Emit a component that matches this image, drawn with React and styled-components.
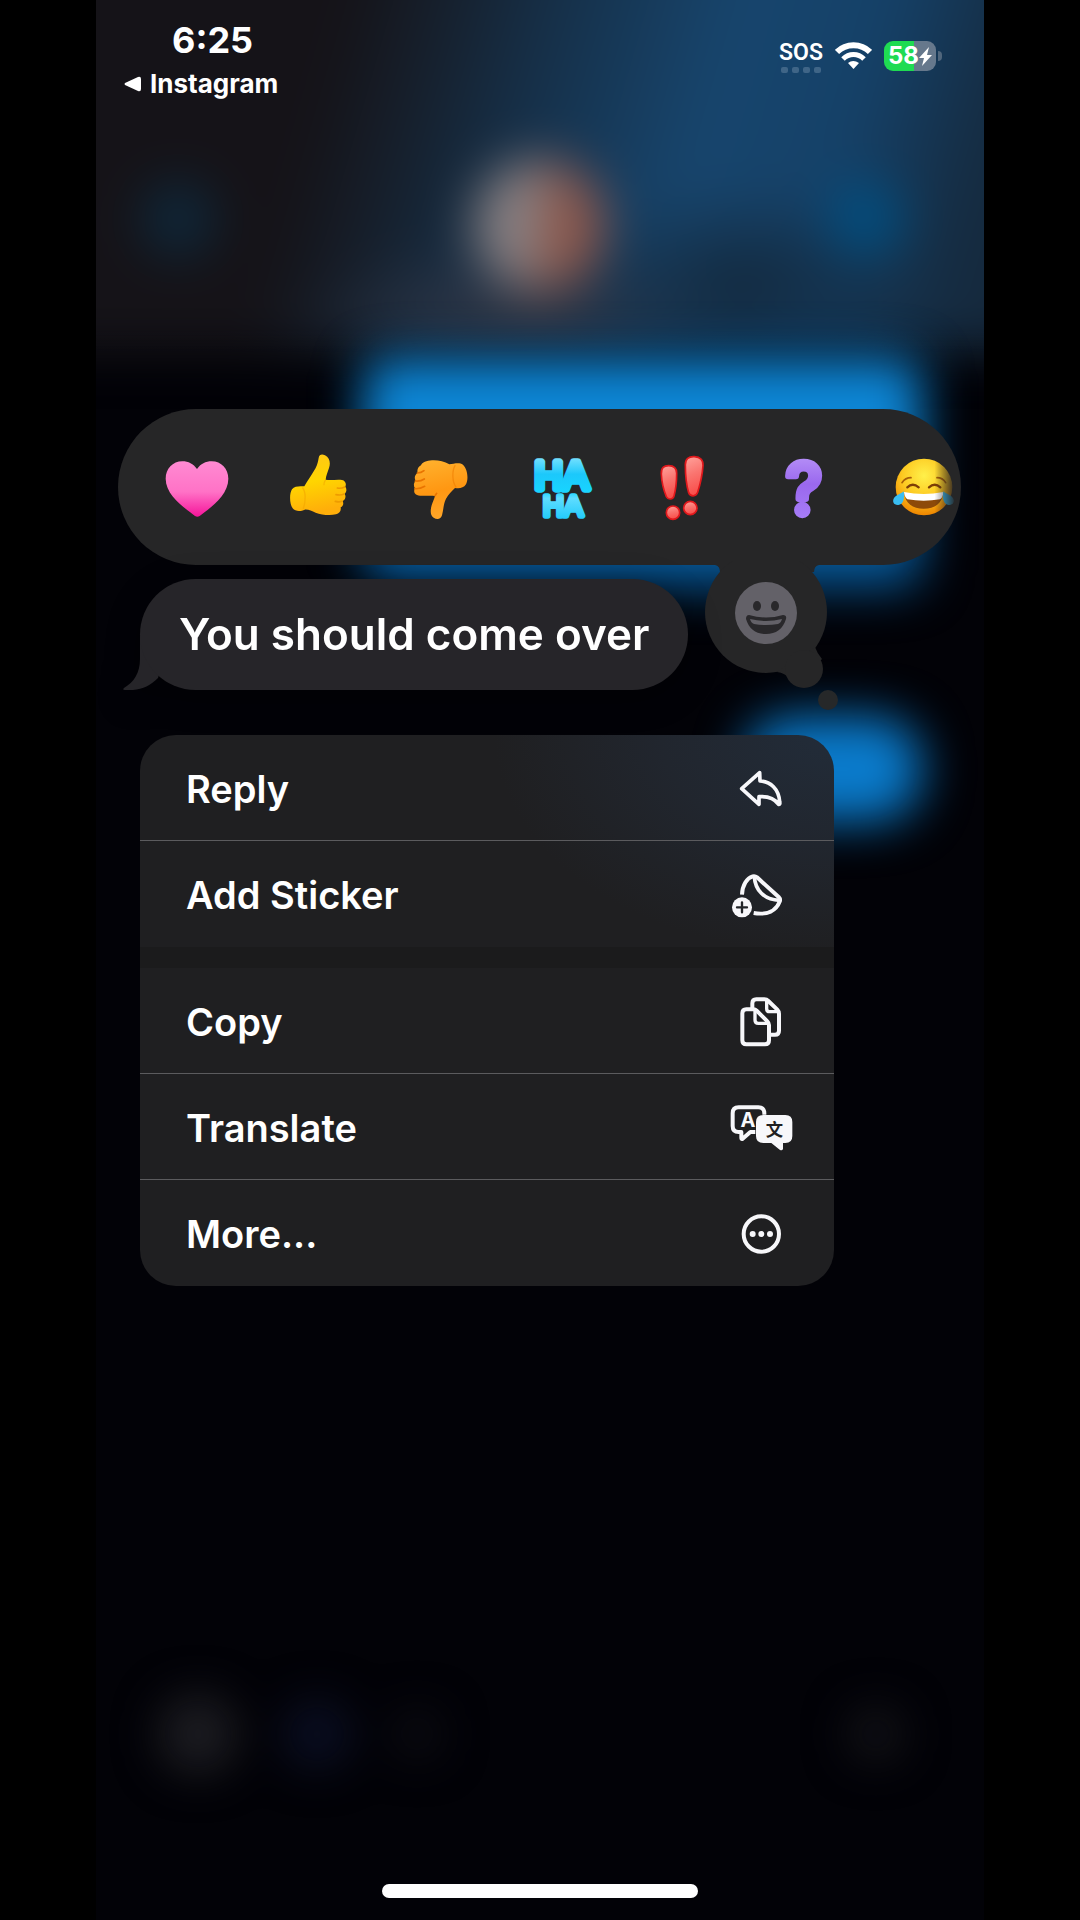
import React from "react";
import styled, { createGlobalStyle } from "styled-components";

const GlobalStyle = createGlobalStyle`
  *, *::before, *::after { box-sizing: border-box; }
  body {
    margin: 0;
    background: #000;
    color: #fff;
    font-family: Inter, "Liberation Sans", sans-serif;
  }
  button { font: inherit; color: inherit; border: 0; background: none; padding: 0; cursor: pointer; }
`;

const Page = styled.div`
  min-height: 100vh;
  display: flex;
  padding: 0 96px;
  background: #000;
`;

const Phone = styled.div`
  position: relative;
  flex: 1;
  min-width: 0;
  display: flex;
  flex-direction: column;
  overflow: hidden;
  background: #020207;
`;

/* Blurred conversation behind the overlay */
const Backdrop = styled.div`
  position: absolute;
  inset: 0;
  display: flex;
  flex-direction: column;
`;

const BlurHeader = styled.div`
  flex: none;
  height: 416px;
  margin: -64px -64px 0;
  padding: 0 108px;
  display: grid;
  grid-template-columns: 1fr 2fr 1fr;
  align-items: center;
  justify-items: center;
  filter: blur(24px);
  background:
    radial-gradient(ellipse 180px 100px at 70% 84%, #13283c 0%, transparent 100%),
    radial-gradient(ellipse 220px 80px at 48% 92%, #2c3444 20%, transparent 100%),
    linear-gradient(106deg, #151318 0%, #151318 29%, #16202d 38%, #163049 48%, #17456d 64%, #154168 77%, #152c42 89%, #152536 100%);
`;

const BlurShade = styled.div`
  flex: none;
  height: 352px;
  margin-top: -352px;
  background: linear-gradient(180deg, rgba(21, 22, 30, 0) 50%, rgba(18, 19, 28, 0.35) 88%, rgba(2, 2, 7, 0.5) 100%);
`;

const BlurButton = styled.span`
  width: 76px;
  height: 76px;
  margin: 150px ${(p) => p.$inset}px 0;
  border-radius: 50%;
  background: ${(p) => p.$color};
  justify-self: ${(p) => p.$side};
`;

const BlurAvatar = styled.span`
  width: 132px;
  height: 132px;
  margin-top: 162px;
  border-radius: 50%;
  background: linear-gradient(95deg, #878184 40%, #8c574b 60%);
`;

const BlurBubble = styled.div`
  flex: none;
  align-self: flex-end;
  width: ${(p) => p.$width};
  height: ${(p) => p.$height}px;
  margin: ${(p) => p.$gap}px 62px 0 0;
  border-radius: ${(p) => p.$radius}px;
  background: ${(p) => p.$color};
  filter: blur(24px);
`;

const BlurComposer = styled.div`
  display: flex;
  align-items: center;
  margin-top: auto;
  padding: 0 80px 146px 62px;
  filter: blur(22px);
`;

const BlurSpot = styled.span`
  width: ${(p) => p.$size}px;
  height: ${(p) => p.$size}px;
  margin-left: ${(p) => p.$left};
  border-radius: 50%;
  background: ${(p) => p.$color};
`;

const Overlay = styled.div`
  position: relative;
  flex: 1;
  display: flex;
  flex-direction: column;
`;

const StatusBar = styled.header`
  display: flex;
  justify-content: space-between;
  align-items: flex-start;
  padding: 18px 42px 0 28px;
`;

const StatusLeft = styled.div`
  display: flex;
  flex-direction: column;
  gap: 6px;
`;

const Time = styled.time`
  padding: 0 48px;
  font-size: 36px;
  line-height: 44px;
  font-weight: 700;
`;

const BackLink = styled.a`
  display: flex;
  align-items: center;
  gap: 9px;
  color: #fff;
  font-size: 26px;
  line-height: 32px;
  font-weight: 700;
  text-decoration: none;
`;

const StatusRight = styled.div`
  display: flex;
  align-items: center;
  gap: 12px;
  height: 76px;
`;

const Signal = styled.div`
  display: flex;
  flex-direction: column;
  align-items: center;
  font-family: Roboto, "Liberation Sans", sans-serif;
  font-size: 23px;
  line-height: 28px;
  font-weight: 600;
`;

const Dots = styled.div`
  display: flex;
  gap: 4px;

  i {
    width: 7px;
    height: 6px;
    border-radius: 2px;
    background: #3f6587;
  }
`;

const Battery = styled.div`
  display: flex;
  align-items: center;
  gap: 2px;

  &::after {
    content: "";
    width: 4px;
    height: 10px;
    border-radius: 0 4px 4px 0;
    background: #50667c;
  }
`;

const BatteryBody = styled.div`
  display: flex;
  align-items: center;
  justify-content: center;
  width: 52px;
  height: 30px;
  border-radius: 9px;
  background: linear-gradient(90deg, #1fdb52 58%, #66788c 58%);
  font-size: 24px;
  line-height: 30px;
  font-weight: 700;
`;

const Focus = styled.main`
  display: flex;
  flex-direction: column;
  align-items: flex-start;
  margin-top: 309px;
`;

const Tapback = styled.section`
  position: relative;
  align-self: stretch;
  margin: 0 23px 0 22px;
`;

const Reactions = styled.div`
  display: flex;
  align-items: center;
  height: 156px;
  padding-left: 18px;
  border-radius: 78px;
  overflow: hidden;
  background: #262627;
`;

const Reaction = styled.button`
  flex: none;
  width: 121px;
  height: 121px;
  display: grid;
  place-items: center;
  mask-image: ${(p) => (p.$fade ? "linear-gradient(90deg, #000 60%, transparent 78%)" : "none")};
`;

const MoreReactions = styled.button`
  position: absolute;
  top: calc(100% - 4px);
  right: 120px;
  line-height: 0;
`;

const Bubble = styled.div`
  display: flex;
  align-items: center;
  height: 111px;
  margin: 14px 0 0 27px;
  filter: drop-shadow(0 8px 16px rgba(0, 0, 0, 0.4));
`;

const BubbleText = styled.p`
  margin: 0 0 0 -27px;
  padding: 28px 39px 29px 39px;
  border-radius: 56px;
  background: #262529;
  font-size: 44px;
  line-height: 54px;
  font-weight: 600;
`;

const Menu = styled.div`
  width: 694px;
  max-width: calc(100% - 88px);
  margin: 45px 0 0 44px;
  border-radius: 36px;
  overflow: hidden;
  background:
    radial-gradient(ellipse 340px 220px at 100% 0, #222c39 0%, rgba(34, 41, 52, 0.7) 50%, transparent 100%),
    #1f1f21;
`;

const MenuGroup = styled.div`
  & + & { border-top: 21px solid rgba(26, 26, 28, 0.8); }
`;

const MenuItem = styled.button`
  width: 100%;
  height: 106px;
  display: flex;
  align-items: center;
  justify-content: space-between;
  padding: 2px 40px 0 46px;
  border-bottom: ${(p) => (p.$last ? "0" : "1px solid #5b5b5e")};
  font-size: 38px;
  line-height: 48px;
  font-weight: 600;
  text-align: left;
`;

const HomeBar = styled.div`
  width: 316px;
  height: 14px;
  margin: auto auto 22px;
  border-radius: 7px;
  background: #fff;
`;

const Art = ({ box, children, w = 72, h = 72 }) => (
  <svg width={w} height={h} viewBox={box} fill="none" overflow="visible" aria-hidden="true">
    {children}
  </svg>
);

const HeartArt = () => (
  <Art box="153 153 216 216">
    <defs>
      <linearGradient id="heart" x1="0" y1="0" x2="0" y2="1">
        <stop offset="0" stopColor="#ff8ad2" />
        <stop offset="0.55" stopColor="#ff72c6" />
        <stop offset="1" stopColor="#f5149a" />
      </linearGradient>
    </defs>
    <path fill="url(#heart)" d="M261 207C250 192 235 184 217 184C188 184 167 207 167 236C167 287 226 325 255 348Q262 353 269 348C299 325 355 287 355 236C355 207 334 184 305 184C287 184 272 192 261 207Z" />
  </Art>
);

const ThumbUpArt = () => (
  <Art box="516 153 216 216">
    <defs>
      <linearGradient id="up" x1="0" y1="0" x2="0.2" y2="1">
        <stop offset="0" stopColor="#ffc61a" />
        <stop offset="0.5" stopColor="#ffd500" />
        <stop offset="1" stopColor="#ffae0a" />
      </linearGradient>
    </defs>
    <path fill="url(#up)" d="M626 174C628 163 636 162 645 166C660 173 662 190 657 204C653 217 648 227 647 239C662 242 680 238 696 240C706 242 710 252 706 260C711 267 710 276 704 281C709 289 706 299 698 303C702 311 699 319 692 322C694 333 688 339 678 343C658 348 634 344 617 338C605 333 596 328 584 329C573 334 556 335 548 325C538 311 538 280 546 268C554 257 571 258 583 259C593 242 607 221 617 204C623 193 624 184 626 174Z" />
    <path stroke="#ee9c00" strokeWidth="5" strokeLinecap="round" d="M682 264C690 266 698 264 704 261M678 284C688 286 696 285 702 282M676 304C684 306 690 306 696 304" />
    <path stroke="#f2a500" strokeWidth="4" strokeLinecap="round" opacity="0.6" d="M578 264C587 274 588 303 580 326M646 241Q641 248 642 254" />
  </Art>
);

const ThumbDownArt = () => (
  <Art box="879 153 216 216">
    <defs>
      <linearGradient id="down" x1="0.2" y1="0" x2="0.4" y2="1">
        <stop offset="0" stopColor="#ffb12d" />
        <stop offset="0.55" stopColor="#ff9712" />
        <stop offset="1" stopColor="#ffa528" />
      </linearGradient>
    </defs>
    <path fill="url(#down)" d="M933 196C936 187 950 182 966 181C984 180 1002 184 1018 193C1032 191 1048 186 1059 194C1073 207 1076 238 1068 253C1060 265 1048 266 1035 264C1026 273 1016 283 1008 296C1000 311 1001 328 996 346C993 358 981 360 971 353C960 346 961 330 965 316C968 306 972 298 975 288C957 285 936 290 921 285C911 281 911 271 915 265C909 257 912 247 917 242C911 232 916 223 923 219C920 209 925 200 933 196Z" />
    <path stroke="#e97400" strokeWidth="5" strokeLinecap="round" d="M922 219C929 219 937 216 942 212M916 243C927 244 937 241 943 237M915 266C926 267 937 263 944 259M975 287L980 280" />
    <path stroke="#ef7d00" strokeWidth="4" strokeLinecap="round" opacity="0.6" d="M1035 197C1026 212 1026 246 1038 261" />
  </Art>
);

const HahaArt = () => (
  <Art box="-18 153 216 216">
    <defs>
      <linearGradient id="ha" x1="0" y1="0" x2="0" y2="1">
        <stop offset="0" stopColor="#8be6ff" />
        <stop offset="0.3" stopColor="#1cc8fb" />
        <stop offset="0.55" stopColor="#18d4ff" />
        <stop offset="0.65" stopColor="#5fdcff" />
        <stop offset="1" stopColor="#18c8fa" />
      </linearGradient>
    </defs>
    <text fill="url(#ha)" stroke="url(#ha)" strokeLinejoin="round" fontFamily="'Liberation Sans', sans-serif" textAnchor="middle">
      <tspan x="95" y="266" fontSize="116" strokeWidth="22">HA</tspan>
      <tspan x="99" y="349" fontSize="86" strokeWidth="16">HA</tspan>
    </text>
  </Art>
);

const ExclaimArt = () => (
  <Art box="345 153 216 216">
    <defs>
      <linearGradient id="ex" x1="0" y1="0" x2="0.2" y2="1">
        <stop offset="0" stopColor="#ffa39c" />
        <stop offset="0.5" stopColor="#fa7570" />
        <stop offset="1" stopColor="#f9504c" />
      </linearGradient>
    </defs>
    <g fill="url(#ex)" stroke="#e0181c" strokeWidth="5">
      <path d="M394 222C393 203 402 197 416 197C430 197 440 204 440 220C440 245 437 270 432 288C429 299 414 300 409 290C402 273 395 248 394 222Z" />
      <path d="M466 194C466 177 476 169 493 170C511 171 520 179 519 197C517 226 511 252 503 277C498 291 481 291 476 278C469 254 466 223 466 194Z" />
      <circle cx="429" cy="338" r="20" />
      <circle cx="481" cy="324" r="20" />
    </g>
  </Art>
);

const QuestionArt = () => (
  <Art box="708 153 216 216">
    <defs>
      <linearGradient id="qu" x1="0" y1="0" x2="0" y2="1">
        <stop offset="0" stopColor="#bf9dfa" />
        <stop offset="0.45" stopColor="#9a68ee" />
        <stop offset="1" stopColor="#ab84fa" />
      </linearGradient>
    </defs>
    <text x="822" y="342" fontSize="210" fontWeight="500" textAnchor="middle" fontFamily="Inter, sans-serif" fill="url(#qu)" stroke="url(#qu)" strokeWidth="19" strokeLinejoin="round">?</text>
  </Art>
);

const JoyArt = () => (
  <Art box="1071 153 216 216">
    <defs>
      <radialGradient id="joy" cx="0.5" cy="0.3" r="0.7">
        <stop offset="0" stopColor="#fff04a" />
        <stop offset="0.55" stopColor="#fdc921" />
        <stop offset="1" stopColor="#ee8500" />
      </radialGradient>
    </defs>
    <circle cx="1182" cy="261" r="85" fill="url(#joy)" />
    <path fill="#8d4a09" d="M1122 278Q1181 292 1240 278C1236 310 1215 326 1181 326C1148 326 1126 310 1122 278Z" />
    <path fill="#fff" d="M1122 276Q1181 288 1240 276Q1239 293 1230 298Q1181 306 1132 298Q1123 292 1122 276Z" />
    <path stroke="#7d3f06" strokeWidth="7" strokeLinecap="round" d="M1132 262Q1148 246 1166 262M1197 262Q1214 246 1231 262" />
    <path stroke="#a75e08" strokeWidth="5" strokeLinecap="round" d="M1116 248Q1126 233 1143 233M1221 233Q1238 233 1247 248" />
    <path fill="#39bdf2" d="M1121 274C1125 297 1119 314 1105 315C1091 316 1086 304 1092 294C1098 285 1112 282 1121 274Z" />
    <path fill="#39bdf2" d="M1240 274C1236 297 1242 314 1256 315C1270 316 1275 304 1269 294C1263 285 1249 282 1240 274Z" />
  </Art>
);

const reactions = [
  ["Heart", HeartArt],
  ["Thumbs up", ThumbUpArt],
  ["Thumbs down", ThumbDownArt],
  ["Laugh", HahaArt],
  ["Emphasize", ExclaimArt],
  ["Question", QuestionArt],
  ["Tears of joy", JoyArt],
];

const ink = { stroke: "#f7f7fa", strokeWidth: 12, strokeLinejoin: "round", strokeLinecap: "round" };

const ReplyIcon = () => (
  <Art w={64} h={56} box="90 90 192 168">
    <path {...ink} strokeWidth="11" d="M179 125L125 173L177 220V197C206 195 224 203 236 220Q241 221 239 212C236 174 212 152 180 150Z" />
  </Art>
);

const StickerIcon = () => (
  <Art w={64} h={56} box="90 408 192 168">
    <path {...ink} strokeLinecap="butt" d="M126 491C127 462 141 441 158 436Q165 434 171 439L236 498Q242 504 239 512C229 539 202 553 161 546" />
    <path {...ink} strokeWidth="11" d="M163 438C166 477 191 506 239 508" />
    <circle cx="126" cy="529" r="30" fill="#f7f7fa" />
    <path stroke="#222428" strokeWidth="7" strokeLinecap="round" d="M126 514V544M111 529H141" />
  </Art>
);

const CopyIcon = () => (
  <Art w={64} h={56} box="90 100 192 168">
    <path {...ink} d="M157 143V128Q157 116 169 116H193Q200 116 205 121L232 147Q237 152 237 159V210Q237 222 225 222H211" />
    <path {...ink} strokeWidth="10" d="M200 118V144Q200 153 209 153H235" />
    <path {...ink} d="M139 146H160Q166 146 170 150L202 182Q207 187 207 193V239Q207 251 195 251H139Q127 251 127 239V158Q127 146 139 146Z" />
    <path {...ink} strokeWidth="10" d="M165 148V178Q165 188 175 188H205" />
  </Art>
);

const TranslateIcon = () => (
  <Art w={64} h={56} box="90 419 192 168">
    <path {...ink} strokeLinecap="butt" d="M166 515H151L127 536Q124 537 124 532V515H116Q98 515 98 497V459Q98 441 116 441H175Q193 441 193 459V463" />
    <text x="144" y="500" fontSize="60" fontWeight="700" textAnchor="middle" fontFamily="Inter, sans-serif" fill="#f7f7fa">A</text>
    <path fill="#f7f7fa" d="M190 464H256Q277 464 277 485V527Q277 548 256 548H249V565Q247 573 239 568L214 548H190Q168 548 168 527V485Q168 464 190 464Z" />
    <text x="223" y="526" fontSize="52" fontWeight="700" textAnchor="middle" fontFamily="'Noto Sans CJK SC', sans-serif" fill="#1f1f21">文</text>
  </Art>
);

const MoreIcon = () => (
  <Art w={64} h={56} box="90 739 192 168">
    <circle cx="184" cy="823" r="53" stroke="#f7f7fa" strokeWidth="12" />
    <g fill="#f7f7fa">
      <circle cx="158" cy="823" r="9" />
      <circle cx="184" cy="823" r="9" />
      <circle cx="210" cy="823" r="9" />
    </g>
  </Art>
);

const menu = [
  [["Reply", ReplyIcon], ["Add Sticker", StickerIcon]],
  [["Copy", CopyIcon], ["Translate", TranslateIcon], ["More...", MoreIcon]],
];

export default function App() {
  return (
    <Page>
      <GlobalStyle />
      <Phone>
        <Backdrop aria-hidden="true">
          <BlurHeader>
            <BlurButton $color="#0f2638" $side="start" $inset={0} />
            <BlurAvatar />
            <BlurButton $color="#034c7c" $side="end" $inset={36} />
          </BlurHeader>
          <BlurShade />
          <BlurBubble $width="63%" $height={230} $gap={6} $radius={24} $color="linear-gradient(180deg, #0d86d6 40%, #075796 85%)" />
          <BlurBubble $width="20%" $height={106} $gap={128} $radius={48} $color="#0a7bcc" />
          <BlurComposer>
            <BlurSpot $size={80} $left="0px" $color="#1c1c21" />
            <BlurSpot $size={70} $left="44px" $color="#0a0e22" />
            <BlurSpot $size={50} $left="40px" $color="#0b0b12" />
            <BlurSpot $size={56} $left="auto" $color="#121217" />
          </BlurComposer>
        </Backdrop>

        <Overlay>
          <StatusBar>
            <StatusLeft>
              <Time>6:25</Time>
              <BackLink href="#instagram">
                <svg width="17" height="16" viewBox="0 0 17 16" aria-hidden="true">
                  <path fill="#fff" d="M1 7L14 1Q17 0 17 3V13Q17 16 14 15L1 9Q0 8 1 7Z" />
                </svg>
                Instagram
              </BackLink>
            </StatusLeft>
            <StatusRight>
              <Signal>
                SOS
                <Dots><i /><i /><i /><i /></Dots>
              </Signal>
              <svg width="37" height="28" viewBox="0 0 37 28" fill="none" aria-label="Wi-Fi">
                <path stroke="#fff" strokeWidth="6" d="M2 10C11 1 26 1 35 10" />
                <path stroke="#fff" strokeWidth="5" d="M8 17C14 11 23 11 29 17" />
                <path fill="#fff" d="M13 21Q18 17 24 21L18.500 27Z" />
              </svg>
              <Battery>
                <BatteryBody>
                  58
                  <svg width="13" height="19" viewBox="0 0 13 19" aria-hidden="true">
                    <path fill="#fff" d="M10 0L0 11H5L3 19L13 8H8Z" />
                  </svg>
                </BatteryBody>
              </Battery>
            </StatusRight>
          </StatusBar>

          <Focus>
            <Tapback aria-label="Reactions">
              <Reactions>
                {reactions.map(([name, Icon], i) => (
                  <Reaction key={name} aria-label={name} $fade={i === reactions.length - 1}>
                    <Icon />
                  </Reaction>
                ))}
              </Reactions>
              <MoreReactions aria-label="More reactions">
                <svg width="136" height="152" viewBox="0 0 136 152" aria-hidden="true">
                  <path fill="#262627" d="M10 0H114V4Q109 5 109 11H15Q15 5 10 4Z" />
                  <circle cx="61" cy="51" r="61" fill="#262627" />
                  <path fill="#262627" d="M110 86Q112 92 117 98L100 116L85 118Q80 112 72 111Z" />
                  <circle cx="99" cy="108" r="19" fill="#262627" />
                  <circle cx="123" cy="139" r="10" fill="#262829" />
                  <g transform="translate(-1 -1)">
                    <circle cx="62" cy="53" r="31" fill="#636168" />
                    <ellipse cx="53" cy="46" rx="4" ry="5" fill="#29282b" />
                    <ellipse cx="71" cy="46" rx="4" ry="5" fill="#29282b" />
                    <path fill="#29282b" d="M45 55Q62 60 79 55Q83 55 82 59C79 69 72 74 62 74C52 74 45 69 42 59Q42 55 45 55Z" />
                    <path fill="#636168" d="M46 59Q62 63 78 59Q77 63 74 64Q62 66 50 64Q47 63 46 59Z" />
                  </g>
                </svg>
              </MoreReactions>
            </Tapback>

            <Bubble>
              <svg width="44" height="111" viewBox="0 0 44 111" aria-hidden="true">
                <path fill="#262529" d="M17 56V80C17 94 11 103 1 109Q-1 111 2 111C16 112 26 108 35 99L44 70Z" />
              </svg>
              <BubbleText>You should come over</BubbleText>
            </Bubble>

            <Menu role="menu">
              {menu.map((group, g) => (
                <MenuGroup key={g} role="group">
                  {group.map(([label, Icon], i) => (
                    <MenuItem key={label} role="menuitem" $last={i === group.length - 1}>
                      {label}
                      <Icon />
                    </MenuItem>
                  ))}
                </MenuGroup>
              ))}
            </Menu>
          </Focus>

          <HomeBar />
        </Overlay>
      </Phone>
    </Page>
  );
}
